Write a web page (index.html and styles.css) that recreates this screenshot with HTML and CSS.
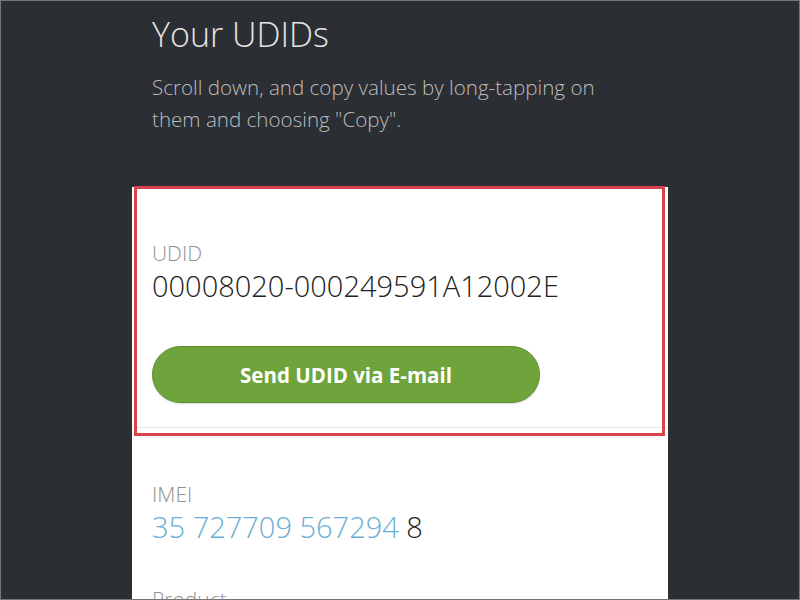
FILE: index.html
```html
<!DOCTYPE html>
<html lang="en">
<head>
    <meta charset="UTF-8">
    <meta name="viewport" content="width=device-width, initial-scale=1.0">
    <title>Your UDIDs</title>
    <link rel="stylesheet" href="styles.css">
</head>
<body>
    <div class="frame">
        <div class="column">
            <div class="intro">
                <h1>Your UDIDs</h1>
                <p>Scroll down, and copy values by long-tapping on them and choosing "Copy".</p>
            </div>

            <div class="card">
                <!-- highlight around the UDID block -->
                <div class="highlight"></div>

                <div class="field field-main">
                    <div class="label">UDID</div>
                    <div class="value">00008020-000249591A12002E</div>
                    <button class="send-btn">Send UDID via E-mail</button>
                </div>

                <div class="field">
                    <div class="label">IMEI</div>
                    <div class="value"><span class="link">35 727709 567294</span> 8</div>
                </div>

                <div class="field">
                    <div class="label">Product</div>
                    <div class="value">iPhone11,8</div>
                </div>
            </div>
        </div>
    </div>
</body>
</html>
```

FILE: styles.css
```css
body {
    margin: 0;
    padding: 0;
    font-family: "Open Sans", Arial, sans-serif;
    background-color: #2b2e33;
}
.frame {
    box-sizing: border-box;
    height: 600px;
    border: 1px solid #767676;
    overflow: hidden;
}
.column {
    width: 536px;
    margin: -1px auto 0;
    background-color: #2b2e33;
}
.intro {
    padding: 12px 20px 0;
    height: 175px;
}
h1 {
    margin: 0;
    font-size: 34px;
    line-height: 44px;
    font-weight: 300;
    color: #e4e4e4;
}
.intro p {
    margin: 15px 0 0;
    max-width: 470px;
    font-size: 20.6px;
    line-height: 32px;
    font-weight: 300;
    color: #bdbdbd;
}
.card {
    position: relative;
    background-color: #fff;
}
.highlight {
    position: absolute;
    left: 2px;
    top: -1px;
    width: 531px;
    height: 250px;
    box-sizing: border-box;
    border: 3px solid #d9434e;
    pointer-events: none;
}
.field {
    padding: 0 20px 43px;
}
.field-main {
    padding: 54px 20px 24px;
    border-bottom: 1px solid #e6e6e6;
    margin-bottom: 54px;
}
.label {
    font-size: 21px;
    line-height: 24px;
    font-weight: 300;
    color: #929292;
}
.value {
    margin-top: 4px;
    font-size: 29px;
    line-height: 34px;
    font-weight: 300;
    color: #222;
}
.link {
    color: #6aaed4;
}
.send-btn {
    display: block;
    margin-top: 43px;
    width: 388px;
    height: 57px;
    border: 1px solid #5e8d31;
    border-radius: 29px;
    background-color: #6ea43b;
    box-shadow: 0 1px 2px rgba(0, 0, 0, 0.15);
    color: #fff;
    font-family: "Open Sans", Arial, sans-serif;
    font-size: 20.5px;
    font-weight: 700;
    cursor: pointer;
}
```
